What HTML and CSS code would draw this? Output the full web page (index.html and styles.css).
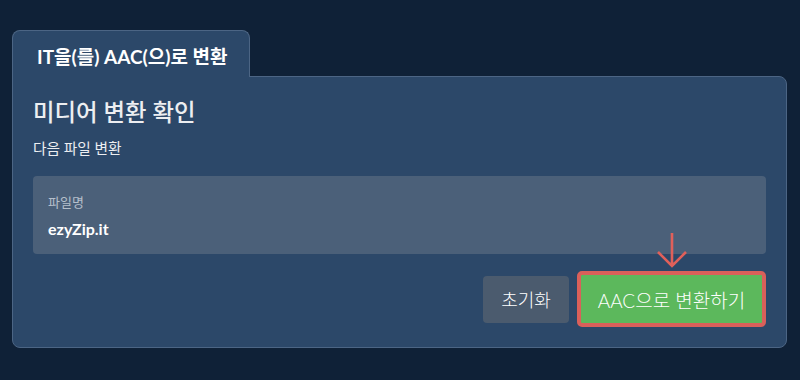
FILE: index.html
```html
<!DOCTYPE html>
<html lang="ko">
<head>
    <meta charset="UTF-8">
    <meta name="viewport" content="width=device-width, initial-scale=1.0">
    <title>IT을(를) AAC(으)로 변환</title>
    <link rel="stylesheet" href="styles.css">
</head>
<body>

    <div class="tab">IT을(를) AAC(으)로 변환</div>

    <div class="panel">
        <h2>미디어 변환 확인</h2>
        <p class="sub">다음 파일 변환</p>

        <div class="field">
            <div class="field-label">파일명</div>
            <div class="field-value">ezyZip.it</div>
        </div>

        <div class="actions">
            <button class="btn btn-reset">초기화</button>
            <div class="convert-wrap">
                <svg class="arrow" width="30" height="36" viewBox="0 0 30 36">
                    <path d="M15 1 V34 M1 20 L15 34 L29 20" fill="none" stroke="#e0605a" stroke-width="2.6"/>
                </svg>
                <button class="btn btn-convert">AAC으로 변환하기</button>
            </div>
        </div>
    </div>

</body>
</html>
```

FILE: styles.css
```css
* { margin: 0; padding: 0; box-sizing: border-box; }

body {
    font-family: Lato, "Noto Sans CJK KR", sans-serif;
    background-color: #0f2137;
    padding: 30px 13px 0 12px;
    width: 800px;
    height: 380px;
    color: #fff;
}

.tab {
    display: inline-block;
    position: relative;
    z-index: 1;
    width: 238px;
    height: 47px;
    margin-bottom: -1px;
    padding: 14px 0 0 24px;
    background: #2c4869;
    border: 1px solid #4c6584;
    border-bottom: none;
    border-radius: 8px 8px 0 0;
    font-size: 19px;
    font-weight: bold;
    line-height: 24px;
}

.panel {
    background: #2c4869;
    border: 1px solid #4c6584;
    border-radius: 0 8px 8px 8px;
    padding: 19px 20px 20px 20px;
}

.panel h2 {
    font-size: 23.4px;
    font-weight: 500;
    line-height: 32px;
    color: #eceef1;
}

.sub {
    margin-top: 10px;
    font-size: 14.7px;
    line-height: 20px;
    color: #eceef1;
}

.field {
    margin-top: 18px;
    background: #4b6079;
    border-radius: 4px;
    padding: 17px 15px 0 15px;
    height: 78px;
}

.field-label {
    font-size: 13px;
    line-height: 18px;
    color: #b5bfcb;
}

.field-value {
    margin-top: 8px;
    font-size: 16px;
    font-weight: bold;
    line-height: 20px;
}

.actions {
    margin-top: 17px;
    display: flex;
    justify-content: flex-end;
    align-items: center;
    gap: 8px;
}

.btn {
    font-family: Lato, "Noto Sans CJK KR", sans-serif;
    color: #fff;
    border: none;
    border-radius: 4px;
    cursor: pointer;
    font-weight: 300;
}

.btn-reset {
    width: 86px;
    height: 47px;
    background: #4b5b6e;
    font-size: 18px;
}

.convert-wrap {
    position: relative;
}

.btn-convert {
    display: block;
    width: 189px;
    height: 56px;
    background: #5cb85c;
    border: 4px solid #d9605a;
    border-radius: 5px;
    font-size: 19px;
}

.arrow {
    position: absolute;
    left: 80px;
    bottom: 59px;
}
```
